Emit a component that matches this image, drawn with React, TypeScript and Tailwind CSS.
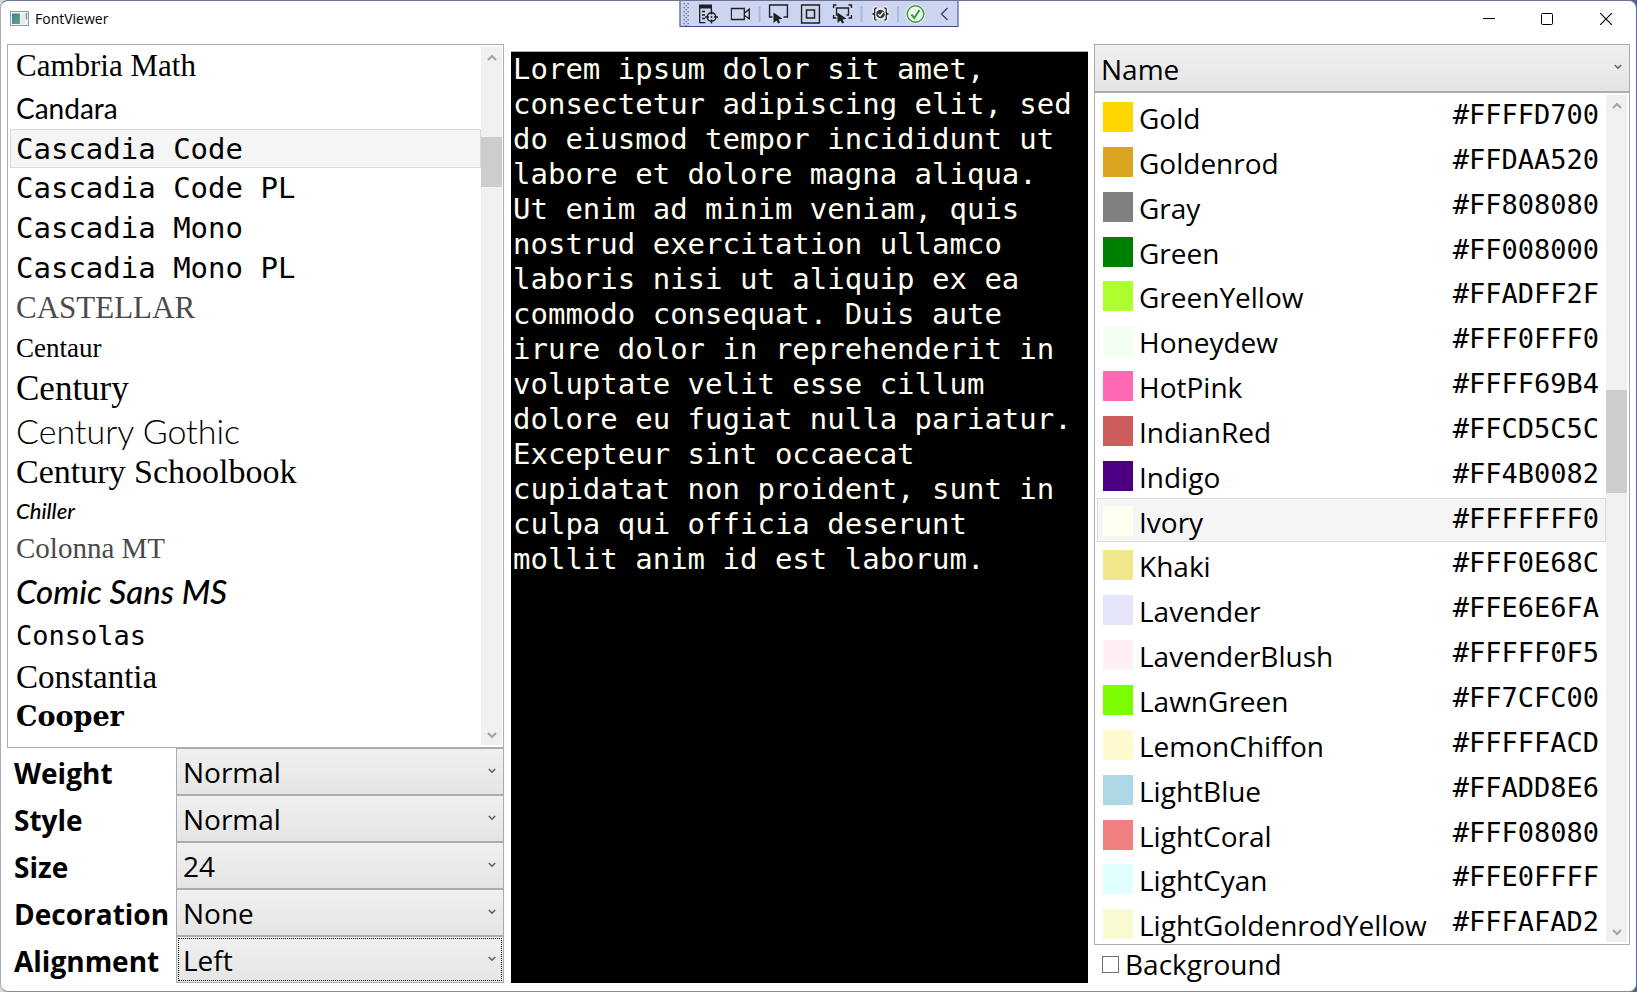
import React, { useState } from "react";

const uiFont = "font-['Segoe_UI','Open_Sans',sans-serif]";

type FontItem = { name: string; row: string; text: string };

const fonts: FontItem[] = [
  { name: "Cambria Math", row: "h-[40px]", text: "font-['Liberation_Serif',serif] text-[31px]" },
  { name: "Candara", row: "h-[43px]", text: "font-['Lato',sans-serif] text-[28px]" },
  { name: "Cascadia Code", row: "h-[39px]", text: "font-['DejaVu_Sans_Mono',monospace] text-[29px]" },
  { name: "Cascadia Code PL", row: "h-[40px]", text: "font-['DejaVu_Sans_Mono',monospace] text-[29px]" },
  { name: "Cascadia Mono", row: "h-[40px]", text: "font-['DejaVu_Sans_Mono',monospace] text-[29px]" },
  { name: "Cascadia Mono PL", row: "h-[40px]", text: "font-['DejaVu_Sans_Mono',monospace] text-[29px]" },
  { name: "CASTELLAR", row: "h-[40px]", text: "font-['Liberation_Serif',serif] text-[31px] text-[#4a4a4a]" },
  { name: "Centaur", row: "h-[40px]", text: "font-['Liberation_Serif',serif] text-[27px]" },
  { name: "Century", row: "h-[42px]", text: "font-['Liberation_Serif',serif] text-[35px]" },
  { name: "Century Gothic", row: "h-[41px]", text: "font-['Lato',sans-serif] text-[34px] font-light" },
  { name: "Century Schoolbook", row: "h-[42px]", text: "font-['Liberation_Serif',serif] text-[34px]" },
  { name: "Chiller", row: "h-[35px]", text: "font-['Lato',sans-serif] text-[22px] italic font-medium" },
  { name: "Colonna MT", row: "h-[39px]", text: "font-['Liberation_Serif',serif] text-[29px] text-[#4a4a4a]" },
  { name: "Comic Sans MS", row: "h-[48px]", text: "font-['Lato',sans-serif] text-[33px] italic font-medium" },
  { name: "Consolas", row: "h-[42px]", text: "font-['DejaVu_Sans_Mono',monospace] text-[27px]" },
  { name: "Constantia", row: "h-[40px]", text: "font-['Liberation_Serif',serif] text-[33px]" },
  { name: "Cooper", row: "h-[40px]", text: "font-['DejaVu_Serif',serif] text-[27px] font-bold" },
];

const colors: [string, string][] = [
  ["Gold", "#FFFFD700"],
  ["Goldenrod", "#FFDAA520"],
  ["Gray", "#FF808080"],
  ["Green", "#FF008000"],
  ["GreenYellow", "#FFADFF2F"],
  ["Honeydew", "#FFF0FFF0"],
  ["HotPink", "#FFFF69B4"],
  ["IndianRed", "#FFCD5C5C"],
  ["Indigo", "#FF4B0082"],
  ["Ivory", "#FFFFFFF0"],
  ["Khaki", "#FFF0E68C"],
  ["Lavender", "#FFE6E6FA"],
  ["LavenderBlush", "#FFFFF0F5"],
  ["LawnGreen", "#FF7CFC00"],
  ["LemonChiffon", "#FFFFFACD"],
  ["LightBlue", "#FFADD8E6"],
  ["LightCoral", "#FFF08080"],
  ["LightCyan", "#FFE0FFFF"],
  ["LightGoldenrodYellow", "#FFFAFAD2"],
];

const settings = [
  { label: "Weight", options: ["Normal", "Light", "Bold"] },
  { label: "Style", options: ["Normal", "Italic", "Oblique"] },
  { label: "Size", options: ["24", "12", "16", "32"] },
  { label: "Decoration", options: ["None", "Underline", "Strikethrough"] },
  { label: "Alignment", options: ["Left", "Center", "Right"] },
];

const sample =
  "Lorem ipsum dolor sit amet, consectetur adipiscing elit, sed do eiusmod tempor incididunt ut labore et dolore magna aliqua. Ut enim ad minim veniam, quis nostrud exercitation ullamco laboris nisi ut aliquip ex ea commodo consequat. Duis aute irure dolor in reprehenderit in voluptate velit esse cillum dolore eu fugiat nulla pariatur. Excepteur sint occaecat cupidatat non proident, sunt in culpa qui officia deserunt mollit anim id est laborum.";

function Chevron({ up = false, className = "" }: { up?: boolean; className?: string }) {
  return (
    <svg viewBox="0 0 10 7" fill="none" stroke="currentColor" strokeWidth="2" className={className} aria-hidden="true">
      <path d={up ? "M1 6 5 2l4 4" : "M1 1l4 4 4-4"} />
    </svg>
  );
}

function ScrollBar({ before, thumb }: { before: string; thumb: string }) {
  return (
    <div className="my-0.5 flex w-[21px] shrink-0 flex-col bg-[#f0f0f0] text-[#a3a3a3]">
      <button aria-label="Scroll up" className="flex h-5 shrink-0 items-center justify-center">
        <Chevron up className="h-[7px] w-[10px]" />
      </button>
      <div className={`shrink-0 ${before}`} />
      <div className={`shrink-0 bg-[#cdcdcd] ${thumb}`} />
      <div className="min-h-0 flex-1" />
      <button aria-label="Scroll down" className="flex h-5 shrink-0 items-center justify-center">
        <Chevron className="h-[7px] w-[10px]" />
      </button>
    </div>
  );
}

function Combo({ id, label, options, focused = false }: { id: string; label?: string; options: string[]; focused?: boolean }) {
  return (
    <div className="relative h-full">
      <select
        id={id}
        aria-label={label}
        className={`block h-full w-full appearance-none rounded-none border border-[#acacac] bg-linear-to-b from-[#f0f0f0] to-[#e5e5e5] pt-px pl-1.5 text-[28px] leading-10 text-black ${
          focused ? "outline-1 -outline-offset-3 outline-dotted outline-black" : "outline-none"
        }`}
      >
        {options.map((o) => (
          <option key={o}>{o}</option>
        ))}
      </select>
      <Chevron className="pointer-events-none absolute top-5 right-2 h-[6px] w-[8px] text-[#606060]" />
    </div>
  );
}

function Tool({ label, children, className = "w-8" }: { label: string; children: React.ReactNode; className?: string }) {
  return (
    <button aria-label={label} className={`flex h-full items-center justify-center ${className}`}>
      <svg viewBox="0 0 20 20" className="h-5 w-5" fill="none" stroke="#1e1e1e" strokeWidth="1.5">
        {children}
      </svg>
    </button>
  );
}

const pointer = "M5 8.5v10.5l3-2.6 1.6 3.2 2-1-1.6-3.2 4-.6z";
const braces =
  "M6 4C3.5 4 4.3 6 4.3 8S3.6 10 2 10c1.6 0 2.3 0 2.3 2s-.8 4 1.7 4M14 4c2.5 0 1.7 2 1.7 4s.7 2 2.3 2c-1.6 0-2.3 0-2.3 2s.8 4-1.7 4";

function DebugToolbar() {
  return (
    <div className="absolute -top-px left-1/2 flex h-[27px] -translate-x-1/2 items-center border border-[#3f4a86] bg-[#ccd5f0]">
      <svg viewBox="0 0 12 25" className="h-[25px] w-3" fill="#5f6b9f" aria-hidden="true">
        {[2, 6, 10, 14, 18, 22].map((y) => (
          <g key={y}>
            <rect x="3" y={y} width="1.3" height="1.3" />
            <rect x="7" y={y} width="1.3" height="1.3" />
            <rect x="5" y={y + 2} width="1.3" height="1.3" />
          </g>
        ))}
      </svg>
      <Tool label="Live Visual Tree">
        <path d="M.5 2.500h13" strokeWidth="4" />
        <path d="M1.200 4v15M1 18.700h6M3.500 7.500h3M3.500 11h3M3.500 14.500h3M12.800 4v3" strokeWidth="1.3" />
        <circle cx="13" cy="13" r="4.3" />
        <path d="M13 6.500v4M13 15.500v4M6.500 13h4M15.500 13h4" />
        <circle cx="13" cy="13" r=".9" fill="#1e1e1e" stroke="none" />
      </Tool>
      <Tool label="Capture">
        <path d="M.8 4.500h13v11h-13zM14 9l4.800-3.800v9.600L14 11.500" strokeWidth="1.3" />
      </Tool>
      <div className="mx-0.5 h-4 w-[2px] bg-[#a9b8dc]" />
      <Tool label="Select Element">
        <path d="M4 13H1V1h18v12h-4" />
        <path d={pointer} fill="#1e1e1e" stroke="none" />
      </Tool>
      <Tool label="Display Layout Adorners">
        <path d="M1 1h18v18H1zM6 6h8v8H6z" />
      </Tool>
      <Tool label="Track Focused Element">
        <path d="M1 4V1h3M16 1h3v3M19 11v3h-3M4 14H1v-3" />
        <path d="M6 11H4V4h12v7h-2" strokeWidth="1.3" />
        <path d={pointer} fill="#1e1e1e" stroke="none" />
      </Tool>
      <div className="mx-0.5 h-4 w-[2px] bg-[#a9b8dc]" />
      <Tool label="Binding Failures">
        <path d={braces} stroke="#f4f4f4" strokeWidth="4" />
        <circle cx="10" cy="10" r="6" fill="#f4f4f4" stroke="none" />
        <path d={braces} strokeWidth="1.3" />
        <circle cx="10" cy="10" r="4.3" fill="#333" stroke="none" />
        <path d="M7.600 10l1.900 2 3.300-4" stroke="#fff" strokeWidth="1.200" />
      </Tool>
      <div className="mx-px h-4 w-px bg-[#8fa2cf]" />
      <Tool label="Hot Reload">
        <circle cx="10" cy="10" r="9.800" fill="#f4f4f4" stroke="none" />
        <circle cx="10" cy="10" r="8.300" stroke="#2f9e35" strokeWidth="1.400" />
        <path d="M5.800 10.500l3 3.500 5.200-8" stroke="#2f9e35" strokeWidth="2" />
      </Tool>
      <Tool label="Collapse" className="w-[26px]">
        <path d="M13 4 7 10l6 6" stroke="#2f3b78" strokeWidth="1.300" />
      </Tool>
    </div>
  );
}

function TitleBar() {
  return (
    <header className="flex h-[43px] shrink-0 items-start justify-between">
      <div className="flex h-9 items-center gap-1.5 pl-[9px]">
        <svg viewBox="0 0 19 16" className="h-4 w-[19px]" aria-hidden="true">
          <defs>
            <linearGradient id="appTile" x1="0" y1="0" x2="1" y2="1">
              <stop offset="0" stopColor="#3f78a0" />
              <stop offset="1" stopColor="#5cae7c" />
            </linearGradient>
          </defs>
          <rect x=".5" y=".5" width="18" height="14" fill="#f4f5f6" stroke="#8f9aa3" />
          <rect x="2" y="2.500" width="8" height="10.500" fill="url(#appTile)" />
          <rect x="11" y="2.500" width="4" height="10.500" fill="#e8ebee" />
          <rect x="15.800" y="2" width="1.400" height="6.500" fill="#5aa08f" />
        </svg>
        <h1 className="text-sm leading-5">FontViewer</h1>
      </div>
      <div className="flex h-[35px]">
        <button aria-label="Minimize" className="flex w-[58px] items-center justify-center">
          <svg viewBox="0 0 12 12" className="h-3 w-3" stroke="#000"><path d="M0 5.500h12" /></svg>
        </button>
        <button aria-label="Maximize" className="flex w-[58px] items-center justify-center">
          <svg viewBox="0 0 12 12" className="h-3 w-3" fill="none" stroke="#000"><rect x=".5" y=".5" width="11" height="11" rx="1" /></svg>
        </button>
        <button aria-label="Close" className="flex w-[60px] items-center justify-center">
          <svg viewBox="0 0 12 12" className="h-3 w-3" stroke="#000" strokeWidth="1.200"><path d="M0 0l12 12M12 0 0 12" /></svg>
        </button>
      </div>
    </header>
  );
}

export default function App() {
  const [font, setFont] = useState("Cascadia Code");
  const [color, setColor] = useState("Ivory");

  return (
    <div className="h-screen bg-linear-to-r from-[#d8d8d8] to-[#56618c]">
      <div className={`relative flex h-full flex-col overflow-hidden rounded-lg border border-t-[#6e7397] border-r-[#5c6690] border-b-[#8a8c98] border-l-[#acacac] bg-white text-black ${uiFont}`}>
        <TitleBar />
        <DebugToolbar />
        <main className="flex min-h-0 flex-1 px-1.5 pb-1.5">
          <section className="mr-[7px] flex w-[497px] shrink-0 flex-col">
            <div className="flex min-h-0 flex-1 border border-[#abadb3] px-px">
              <ul role="listbox" aria-label="Fonts" className="min-w-0 flex-1 overflow-hidden pt-px pl-px">
                {fonts.map((f) => (
                  <li
                    key={f.name}
                    role="option"
                    aria-selected={f.name === font}
                    onClick={() => setFont(f.name)}
                    className={`flex items-center border pl-[5px] ${f.row} ${
                      f.name === font ? "border-[#dadada] bg-[#f5f5f5]" : "border-transparent"
                    }`}
                  >
                    <span className={`leading-9 whitespace-nowrap ${f.text}`}>{f.name}</span>
                  </li>
                ))}
              </ul>
              <ScrollBar before="h-[70px]" thumb="h-[50px]" />
            </div>
            <div className="grid shrink-0 grid-cols-[169px_1fr] auto-rows-[47px] pb-0.5">
              {settings.map((s) => (
                <React.Fragment key={s.label}>
                  <label htmlFor={s.label} className="pt-[5px] pl-[7px] text-[28px] leading-10 font-bold">
                    {s.label}
                  </label>
                  <Combo id={s.label} options={s.options} focused={s.label === "Alignment"} />
                </React.Fragment>
              ))}
            </div>
          </section>

          <textarea
            readOnly
            aria-label="Preview"
            value={sample}
            className="mt-[7px] mb-0.5 min-w-0 flex-1 resize-none overflow-hidden border-t border-[#abadb3] bg-black pr-1 pl-0.5 font-['DejaVu_Sans_Mono',monospace] text-[29px] leading-[35px] text-[#fffff0] outline-none"
          />

          <section className="ml-1.5 flex w-[536px] shrink-0 flex-col">
            <div className="h-12 shrink-0">
              <Combo id="sort" label="Sort by" options={["Name", "Value"]} />
            </div>
            <div className="flex min-h-0 flex-1 border border-[#abadb3] px-0.5">
              <ul role="listbox" aria-label="Colors" className="-mb-0.5 flex min-w-0 flex-1 flex-col pt-px">
                {colors.map(([name, hex]) => (
                  <li
                    key={name}
                    role="option"
                    aria-selected={name === color}
                    onClick={() => setColor(name)}
                    className={`flex min-h-0 flex-1 items-start border pr-1.5 pl-[5px] ${
                      name === color ? "border-[#dadada] bg-[#f5f5f5]" : "border-transparent"
                    }`}
                  >
                    <span className="mt-[7px] h-[30px] w-[30px] shrink-0" style={{ backgroundColor: `#${hex.slice(3)}` }} />
                    <span className="mt-[3px] ml-1.5 flex-1 text-[28px] leading-10">{name}</span>
                    <span className="font-['DejaVu_Sans_Mono',monospace] text-[27px] leading-10">{hex}</span>
                  </li>
                ))}
              </ul>
              <ScrollBar before="h-[275px]" thumb="h-[103px]" />
            </div>
            <label className="flex h-10 shrink-0 items-center gap-1.5 pb-0.5 pl-2 text-[28px] leading-10">
              <input type="checkbox" className="h-[17px] w-[17px] appearance-none border border-[#707070] bg-white" />
              Background
            </label>
          </section>
        </main>
      </div>
    </div>
  );
}
